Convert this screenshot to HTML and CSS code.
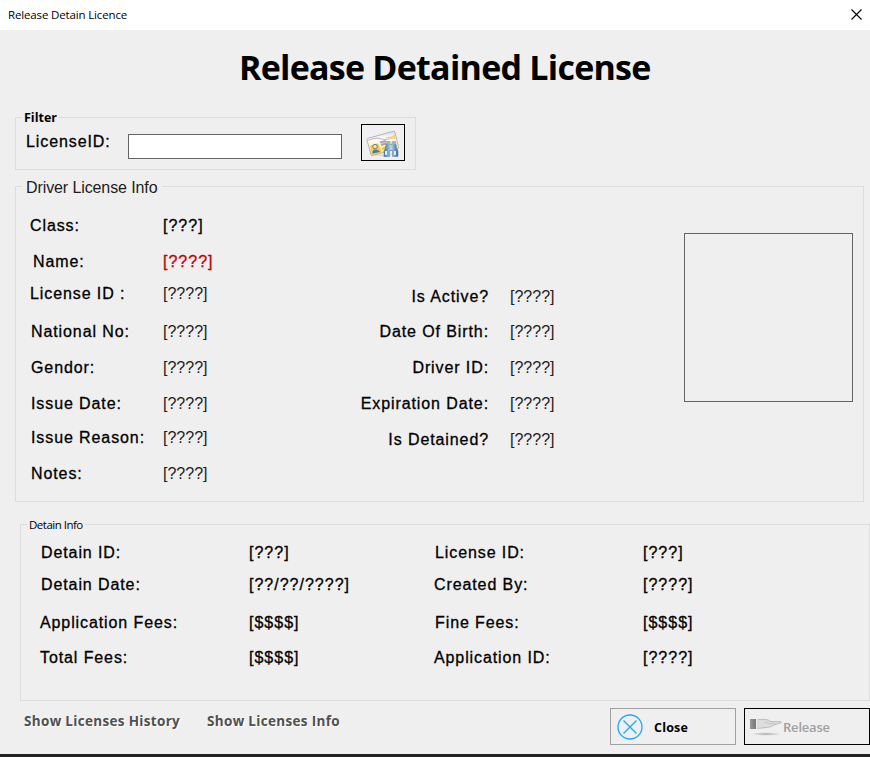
FILE: index.html
```html
<!DOCTYPE html>
<html lang="en">
<head>
<meta charset="utf-8">
<title>Release Detain Licence</title>
<link rel="stylesheet" href="styles.css">
</head>
<body>
<div class="window">
  <header class="titlebar">
    <span class="caption">Release Detain Licence</span>
    <svg class="close-x" width="11" height="11" viewBox="0 0 11 11"><path d="M.5 .5 10.5 10.5M10.5 .5 .5 10.5" stroke="#000" stroke-width="1.1" fill="none"/></svg>
  </header>
  <h1><span class="title-text">Release Detained License</span></h1>

  <fieldset class="group filter">
    <legend><span class="filter-legend">Filter</span></legend>
    <div class="filter-row">
      <label class="strong" for="license">LicenseID:</label>
      <input id="license" type="text">
      <button class="find" type="button" aria-label="Find license">
        <svg width="34" height="30" viewBox="0 0 34 30">
          <defs>
            <linearGradient id="card" x1="0" y1="0" x2="0" y2="1"><stop offset="0" stop-color="#d9d9dc"/><stop offset=".3" stop-color="#fff"/><stop offset=".65" stop-color="#fff2bd"/><stop offset="1" stop-color="#f4d35d"/></linearGradient>
            <linearGradient id="tube" x1="0" x2="1"><stop offset="0" stop-color="#456f9c"/><stop offset=".5" stop-color="#b9d7ef"/><stop offset="1" stop-color="#35648f"/></linearGradient>
          </defs>
          <path d="M8 26 25 25 33 18 31 24 20 28z" fill="#aaa" opacity=".35"/>
          <path d="M1.500 9.500 27.500 2.200Q28.500 2 28.900 3L32.500 18Q32.700 19 31.700 19.300L6.500 26.500Q5.300 26.800 5 25.700L1 11Q.7 9.800 1.500 9.500z" fill="url(#card)" stroke="#a5a5a8" stroke-width=".8"/>
          <path d="M1.500 11.500Q10 8 16 10T29 6" stroke="#c9c9cd" fill="none" stroke-width="1.300"/>
          <path d="M17 7.500Q24 9 29 6L30 10Q24 10 17 7.500z" fill="#ffd466"/>
          <path d="M4.500 17 12 14.800 14.700 22.500 6.800 24.700z" fill="#ffd445" stroke="#e7b928" stroke-width=".6"/>
          <circle cx="9" cy="17.600" r="2.300" fill="#eee2c8" stroke="#5b6168" stroke-width=".8"/>
          <path d="M6.500 24.500Q6 20.500 9.500 20.500T14 23z" fill="#477fa7"/>
          <path d="M14 13.500 20 12M15 16 20 14.500" stroke="#a5a5aa" stroke-width="2"/>
          <path d="M16 20 20 18" stroke="#f1c839" stroke-width="2"/>
          <path d="M20.500 12.500h3.500v3h2v-3h3.500l1 6 1.500 4v5h-5.500v-6h-3v6h-5.500v-5l1.500-4z" fill="url(#tube)" stroke="#5d88ae" stroke-width=".6"/>
          <path d="M20 12h4v3h-4zM26 12h4v3h-4z" fill="#a9b1bb"/>
          <path d="M19 22h2v4h-2zM28 22h2v4h-2z" fill="#d9efff"/>
        </svg>
      </button>
    </div>
  </fieldset>

  <fieldset class="group driver">
    <legend><span class="driver-legend">Driver License Info</span></legend>
    <div class="driver-body">
      <dl class="fields primary">
        <dt>Class:</dt><dd class="strong">[???]</dd>
        <dt class="in2">Name:</dt><dd class="strong red">[????]</dd>
        <dt>License ID :</dt><dd>[????]</dd>
        <dt class="in1">National No:</dt><dd>[????]</dd>
        <dt class="in1">Gendor:</dt><dd>[????]</dd>
        <dt class="in1">Issue Date:</dt><dd>[????]</dd>
        <dt class="in1">Issue Reason:</dt><dd>[????]</dd>
        <dt class="in1">Notes:</dt><dd>[????]</dd>
      </dl>
      <dl class="fields secondary">
        <dt>Is Active?</dt><dd>[????]</dd>
        <dt>Date Of Birth:</dt><dd>[????]</dd>
        <dt>Driver ID:</dt><dd>[????]</dd>
        <dt>Expiration Date:</dt><dd>[????]</dd>
        <dt>Is Detained?</dt><dd>[????]</dd>
      </dl>
      <div class="photo"></div>
    </div>
  </fieldset>

  <fieldset class="group detain">
    <legend><span class="detain-legend">Detain Info</span></legend>
    <dl class="detain-grid">
      <dt class="in1">Detain ID:</dt><dd>[???]</dd><dt class="in1">License ID:</dt><dd>[???]</dd>
      <dt class="in1">Detain Date:</dt><dd>[??/??/????]</dd><dt>Created By:</dt><dd>[????]</dd>
      <dt>Application Fees:</dt><dd>[$$$$]</dd><dt class="in1">Fine Fees:</dt><dd>[$$$$]</dd>
      <dt>Total Fees:</dt><dd>[$$$$]</dd><dt>Application ID:</dt><dd>[????]</dd>
    </dl>
  </fieldset>

  <footer class="actions">
    <span class="link history">Show Licenses History</span>
    <span class="link info">Show Licenses Info</span>
    <button class="btn btn-close" type="button">
      <svg width="26" height="26" viewBox="0 0 26 26" fill="none" stroke="#1eaaf1" stroke-width="1.300"><circle cx="13" cy="13" r="12"/><path d="M6.500 6.500 19.500 19.500M19.500 6.500 6.500 19.500"/></svg>
      <span>Close</span>
    </button>
    <button class="btn btn-release" type="button">
      <svg width="33" height="18" viewBox="0 0 33 18">
        <defs><linearGradient id="cuff"><stop offset="0" stop-color="#999"/><stop offset="1" stop-color="#777"/></linearGradient>
        <radialGradient id="shade"><stop offset="0" stop-color="#aaa"/><stop offset="1" stop-color="#efefef"/></radialGradient></defs>
        <ellipse cx="16" cy="16" rx="15" ry="1.800" fill="url(#shade)"/>
        <path d="M7 1.500 15 1.300Q18 1.500 21 3.500L31 3.700Q32 4.200 31 4.700L24 7Q20 9.500 16 9.500L7 10.500z" fill="#ddd" stroke="#b2b2b2" stroke-width=".8"/>
        <path d="M14 4Q20 6 25 5.500" fill="none" stroke="#c2c2c2" stroke-width=".8"/>
        <path d="M0 1h6v10H0z" fill="url(#cuff)"/><path d="M6 1h1.500v10H6z" fill="#eee"/>
      </svg>
      <span>Release</span>
    </button>
  </footer>
  <div class="edge"></div>
</div>
</body>
</html>
```
FILE: styles.css
```css
* { box-sizing: border-box; }
body { margin: 0; background: #efefef; color: #000; font: 16px/20px "Liberation Sans", Arial, sans-serif; overflow: hidden; }
dl, dd, h1 { margin: 0; }
.window { width: 870px; height: 757px; display: flex; flex-direction: column; }
.titlebar { height: 30px; flex: none; background: #fff; display: flex; align-items: center; justify-content: space-between; padding: 0 8px; }
.caption { font: 11.5px/16px "Open Sans", sans-serif; letter-spacing: -.15px; }
.close-x { margin: -2px 0 0 0; }
h1 { height: 79px; flex: none; padding: 13px 0 0 239px; font: bold 34px/48px "Open Sans", sans-serif; letter-spacing: -.75px; white-space: nowrap; }

.group { border: 1px solid #dcdcdc; padding: 0; margin: 0; min-width: 0; flex: none; }
legend { padding: 0 2px; margin-left: 6px; white-space: nowrap; }
legend span { display: block; }
.filter { width: 401px; height: 61px; margin-left: 15px; }
.filter-legend { font: bold 12.5px/14px "Open Sans", sans-serif; padding-top: 2px; }
.filter-row { display: flex; align-items: flex-start; padding-left: 10px; margin-top: -1px; }
.filter-row label { width: 102px; margin-top: 8px; }
input { width: 214px; height: 25px; margin: 10px 19px 0 0; padding: 0 4px; border: 1px solid #646464; background: #fff; font: inherit; outline: 0; }
.find { width: 44px; height: 37px; padding: 2px 0 0 4px; border: 1px solid #000; background: #f1eff1; display: block; }
.find svg { display: block; }

.driver { width: 849px; height: 326px; margin: 6px 0 0 15px; }
.driver-legend { font-size: 16px; line-height: 16px; letter-spacing: -.1px; padding: 4px 2px 0; color: #1c1c1c; }
.driver-body { display: flex; align-items: flex-start; padding-left: 14px; }
.fields { display: grid; }
.fields dd { color: #1c1c1c; }
.primary { width: 320px; grid-template-columns: 133px 1fr; grid-template-rows: 36px 32px 38px 36px 36px 34px 36px 20px; margin-top: 20px; }
.secondary { width: 241px; grid-template-columns: 139px 1fr; column-gap: 21px; grid-template-rows: 35px 36px 36px 36px 20px; margin-top: 91px; }
.secondary dt { text-align: right; }
dt, .strong, .detain dd { letter-spacing: 1px; -webkit-text-stroke: .3px currentColor; white-space: nowrap; }
dt, label.strong { letter-spacing: .9px; }
.in1 { padding-left: 1px; }
.in2 { padding-left: 3px; }
.fields dd.strong { color: #000; }
.fields dd.red { color: #c00000; }
.photo { width: 169px; height: 169px; border: 1px solid #646464; margin: 37px 0 0 93px; }

.detain { width: 850px; height: 186px; margin: 13px 0 0 20px; }
.detain-legend { font: 11.5px/16px "Open Sans", sans-serif; letter-spacing: -.5px; padding-top: 2px; }
.detain-grid { display: grid; grid-template-columns: 209px 185px 209px 1fr; grid-template-rows: 32px 38px 35px 20px; margin: 10px 0 0 19px; }

.actions { flex: 1; display: flex; align-items: flex-start; padding: 6px 0 0 24px; }
.link { font: bold 13.5px/20px "Open Sans", sans-serif; letter-spacing: .32px; color: #505050; text-shadow: 1px 1px 0 #fff; white-space: nowrap; margin-top: 4px; }
.history { width: 183px; }
.info { width: 403px; }
.btn { height: 37px; border: 1px solid #a0a0a0; background: #efefef; display: flex; align-items: center; font: bold 12.5px/20px "Open Sans", sans-serif; padding: 0; margin-top: 1px; }
.btn-close { width: 126px; padding-left: 6px; gap: 11px; color: #000; margin-right: 8px; }
.btn-close span { padding-top: 2px; letter-spacing: .2px; }
.btn-release { width: 126px; padding-left: 5px; border-color: #000; color: #a0a0a0; font-weight: 600; font-size: 13px; letter-spacing: -.2px; }
.edge { height: 3px; flex: none; background: #222; }
```
